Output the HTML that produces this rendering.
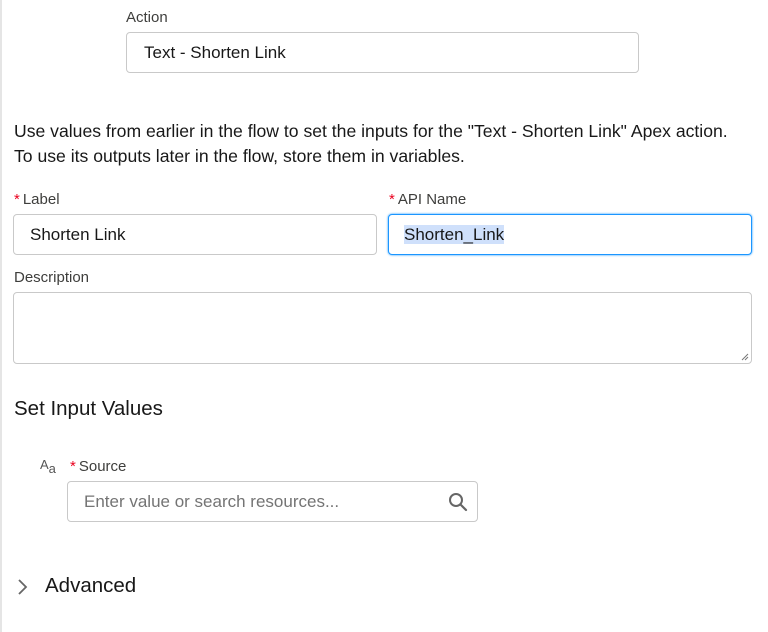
<!DOCTYPE html>
<html><head><style>
body{margin:0;width:768px;height:632px;background:#fff;font-family:"Liberation Sans",sans-serif;color:#181818;position:relative;overflow:hidden}
.a{position:absolute}
.lbl{font-size:15px;color:#3e3e3c}
.in{position:absolute;border:1px solid #c9c9c9;border-radius:4px;background:#fff;box-sizing:border-box;font-size:17px;color:#181818}
.star{color:#ea001e;margin-right:3px}
</style></head><body>
<div class="a" style="left:0;top:0;width:2px;height:632px;background:#e5e5e5"></div>
<div class="a lbl" style="left:126px;top:9px">Action</div>
<div class="in" style="left:126px;top:32px;width:513px;height:41px;padding:10px 17px">Text - Shorten Link</div>
<div class="a" style="left:14px;top:119px;font-size:17.6px;line-height:25px;color:#181818;white-space:nowrap">Use values from earlier in the flow to set the inputs for the "Text - Shorten Link" Apex action.<br>To use its outputs later in the flow, store them in variables.</div>
<div class="a lbl" style="left:14px;top:191px"><span class="star">*</span>Label</div>
<div class="a lbl" style="left:389px;top:191px"><span class="star">*</span>API Name</div>
<div class="in" style="left:13px;top:214px;width:364px;height:41px;padding:10px 16px">Shorten Link</div>
<div class="in" style="left:388px;top:214px;width:364px;height:41px;padding:10px 15px;border:1px solid #1b96ff;box-shadow:0 0 2px #1b96ff"><span style="background:#cfe0fb">Shorten_Link</span></div>
<div class="a lbl" style="left:14px;top:269px">Description</div>
<div class="in" style="left:13px;top:292px;width:739px;height:72px"><svg class="a" style="right:2px;bottom:2px" width="8" height="8"><path d="M1 7L7 1M4 7L7 4" stroke="#777" stroke-width="1"/></svg></div>
<div class="a" style="left:14px;top:397px;font-size:20.5px;color:#181818">Set Input Values</div>
<div class="a" style="left:40px;top:457px;font-size:13px;color:#555">A<span style="font-size:13px;position:relative;top:4px">a</span></div>
<div class="a lbl" style="left:70px;top:458px"><span class="star">*</span>Source</div>
<div class="in" style="left:67px;top:481px;width:411px;height:41px;padding:10px 16px;color:#747474">Enter value or search resources...<svg class="a" style="right:9px;top:10px" width="20" height="20"><circle cx="8" cy="8" r="6" fill="none" stroke="#666" stroke-width="2"/><path d="M12.5 12.5L18 18" stroke="#666" stroke-width="2.2" stroke-linecap="round"/></svg></div>
<svg class="a" style="left:17px;top:578px" width="12" height="18"><path d="M2 2L9 9L2 16" fill="none" stroke="#666" stroke-width="1.8"/></svg>
<div class="a" style="left:45px;top:574px;font-size:20.5px;color:#181818">Advanced</div>
</body></html>
